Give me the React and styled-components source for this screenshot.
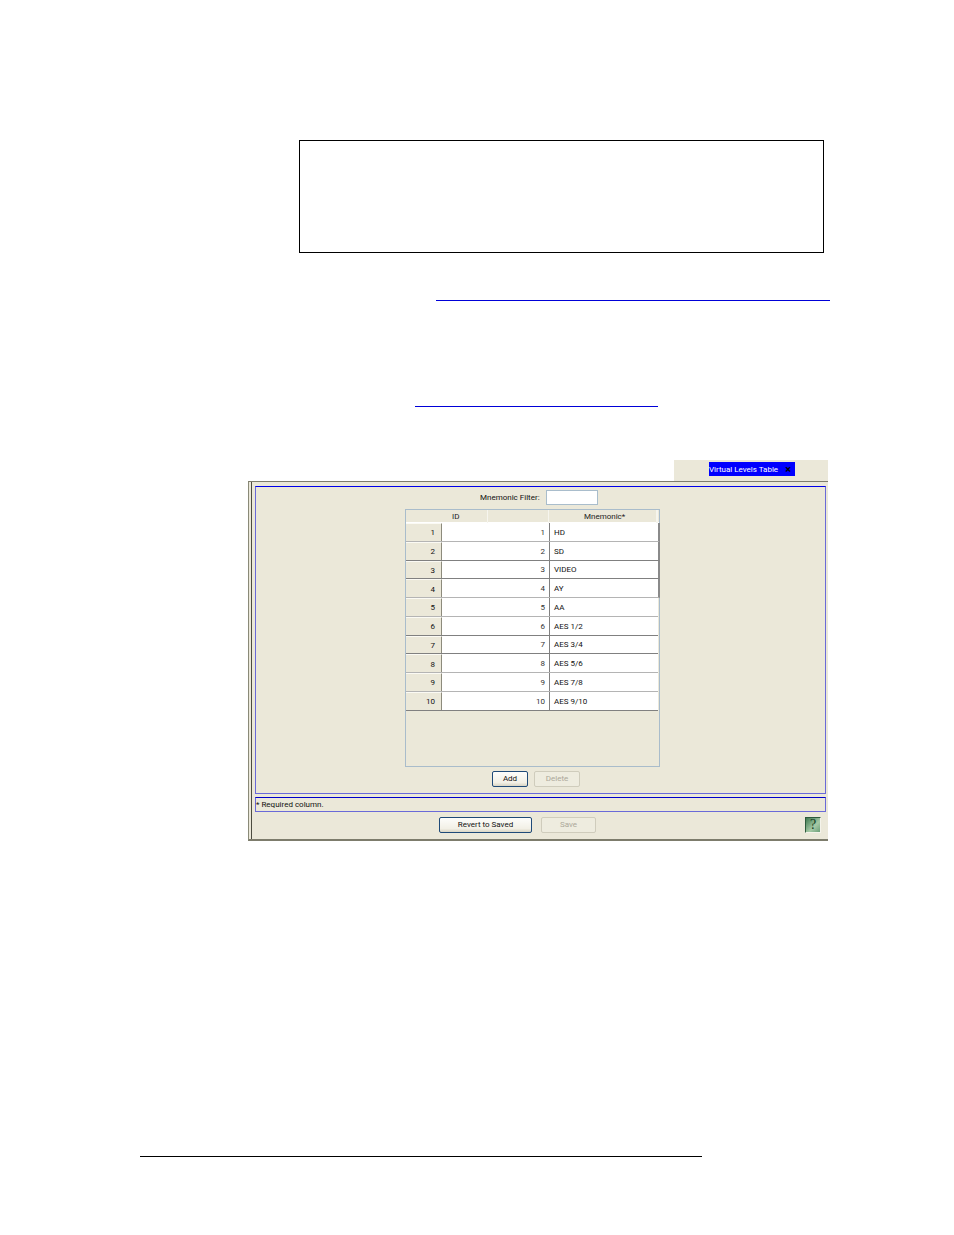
import React from "react";
import styled, { createGlobalStyle } from "styled-components";

const uiFont = `Roboto, "Liberation Sans", Arial, sans-serif`;

const Global = createGlobalStyle`
  html, body { margin: 0; padding: 0; background: #fff; }
  body { font-family: ${uiFont}; }
  #root { width: 954px; height: 1235px; overflow: hidden; }
`;

const Page = styled.div`
  display: flex;
  flex-direction: column;
  align-items: flex-start;
  width: 954px;
  height: 1235px;
  padding-top: 140px;
  box-sizing: border-box;
`;

const NoteBox = styled.div`
  width: 525px;
  height: 113px;
  margin-left: 299px;
  box-sizing: border-box;
  border: 1px solid #000;
`;

const LinkRule = styled.div`
  width: ${(p) => p.$width}px;
  height: 1px;
  margin-left: ${(p) => p.$left}px;
  margin-top: ${(p) => p.$top}px;
  background: #0000d8;
`;

const TabBar = styled.div`
  display: flex;
  justify-content: flex-end;
  margin-top: 53px;
  margin-left: 248px;
  width: 580px;
`;

const TabStrip = styled.div`
  width: 154px;
  height: 21px;
  box-sizing: border-box;
  padding: 2px 0 0 35px;
  background: #ebe8d9;
`;

const ActiveTab = styled.div`
  display: flex;
  align-items: center;
  justify-content: space-between;
  width: 86px;
  height: 14px;
  box-sizing: border-box;
  padding: 0 4px 0 0;
  background: #0000ff;
  color: #fff;
  font-size: 8px;
  white-space: nowrap;
`;

const CloseMark = styled.span`
  color: #000;
  font-size: 11px;
  font-weight: 700;
  line-height: 1;
`;

const Win = styled.div`
  display: flex;
  flex-direction: column;
  width: 580px;
  height: 360px;
  margin-left: 248px;
  box-sizing: border-box;
  padding: 4px 2px 0 4px;
  background: #ebe8d9;
  border-top: 1px solid #7d7c6c;
  border-bottom: 2px solid #7d7c6c;
  border-left: 1px solid #8a8a78;
  box-shadow: inset 2px 0 0 #ebe8d9, inset 3px 0 0 #4c4c40;
`;

const Panel = styled.div`
  display: flex;
  flex-direction: column;
  height: 308px;
  box-sizing: border-box;
  margin-left: 2px;
  padding: 3px 0 0 149px;
  border: 1px solid #6a6ad8;
  border-top-color: #0000e8;
`;

const FilterRow = styled.div`
  display: flex;
  align-items: center;
  gap: 8px;
  height: 15px;
  padding-left: 75px;
  font-size: 8px;
  color: #111;
`;

const FilterLabel = styled.span`
  width: 58px;
  white-space: nowrap;
  padding-bottom: 1px;
`;

const FilterInput = styled.div`
  width: 52px;
  height: 15px;
  box-sizing: border-box;
  background: #fff;
  border: 1px solid #a9bdcc;
`;

const Table = styled.div`
  display: flex;
  flex-direction: column;
  width: 255px;
  height: 258px;
  margin-top: 4px;
  box-sizing: border-box;
  border: 1px solid #a9bccb;
`;

const HeaderRow = styled.div`
  display: grid;
  grid-template-columns: 82px 61px 109px;
  height: 13px;
  box-sizing: border-box;
  font-size: 8px;
  color: #222;
  line-height: 14px;
  border-bottom: 1px solid #fff;
`;

const HeaderId = styled.div`
  padding-left: 46px;
  border-right: 1px solid #f6f5ee;
`;

const HeaderSpacer = styled.div`
  border-right: 1px solid #f6f5ee;
`;

const HeaderCell = styled.div`
  padding-left: 35px;
  border-right: 2px solid #f6f5ee;
`;

const Row = styled.div`
  display: grid;
  grid-template-columns: 36px 108px 108px;
  width: ${(p) => (p.$bar ? 254 : 252)}px;
  height: 18.75px;
  box-sizing: border-box;
  font-size: 8px;
  color: #111;
  background: #fff;
  border-bottom: 1px solid ${(p) => (p.$dark ? "#808080" : "#b4b4b4")};
  ${(p) => p.$bar && "border-right: 2px solid #8a8a8a;"}
`;

const RowHead = styled.div`
  display: flex;
  align-items: center;
  justify-content: flex-end;
  padding: 1px 6px 0 0;
  background: #ebe8d9;
  border-top: 1px solid #fbfaf4;
  border-right: 1px solid #8d8b7c;
`;

const IdCell = styled.div`
  display: flex;
  align-items: center;
  justify-content: flex-end;
  padding: 1px 4px 0 0;
  border-right: 1px solid #808080;
  color: #333;
`;

const NameCell = styled.div`
  display: flex;
  align-items: center;
  padding: 1px 0 0 4px;
`;

const TableActions = styled.div`
  display: flex;
  gap: 6px;
  margin-top: 4px;
  padding-left: 87px;
`;

const Btn = styled.div`
  display: flex;
  flex-shrink: 0;
  align-items: center;
  justify-content: center;
  width: ${(p) => p.$w}px;
  height: 16px;
  box-sizing: border-box;
  padding-bottom: 2px;
  font-size: 8px;
  color: ${(p) => (p.$off ? "#aca899" : "#111")};
  background: ${(p) =>
    p.$off ? "#eeecdf" : "linear-gradient(#fdfdfb, #f2f0e6 75%, #d9d5c4)"};
  border: 1px solid ${(p) => (p.$off ? "#cfccbc" : "#1f4a78")};
  border-radius: 2px;
`;

const StatusBar = styled.div`
  display: flex;
  align-items: center;
  height: 15px;
  margin: 3px 0 0 2px;
  box-sizing: border-box;
  border: 1px solid #6a6ad8;
  border-top-color: #0000c8;
  font-size: 8px;
  color: #111;
`;

const Footer = styled.div`
  display: flex;
  align-items: flex-start;
  gap: 9px;
  margin-top: 5px;
  padding-left: 186px;
`;

const HelpIcon = styled.div`
  display: flex;
  flex-shrink: 0;
  align-items: center;
  justify-content: center;
  width: 16px;
  height: 16px;
  margin-left: 200px;
  box-sizing: border-box;
  background: linear-gradient(135deg, #3f7a50, #a5c9a6 60%, #6c9f78);
  border: 1px solid #2d5b3c;
  border-right-color: #f4f3ea;
  border-bottom-color: #f4f3ea;
  color: #123c22;
  font-size: 14px;
  font-family: "Liberation Serif", serif;
`;

const BottomRule = styled.div`
  width: 562px;
  height: 1px;
  margin-left: 140px;
  margin-top: 315px;
  background: #000;
`;

const rows = [
  ["1", "HD", 0, 1],
  ["2", "SD", 1, 1],
  ["3", "VIDEO", 1, 1],
  ["4", "AY", 0, 1],
  ["5", "AA", 0, 0],
  ["6", "AES 1/2", 1, 0],
  ["7", "AES 3/4", 1, 0],
  ["8", "AES 5/6", 0, 0],
  ["9", "AES 7/8", 0, 0],
  ["10", "AES 9/10", 1, 0],
];

export default function App() {
  return (
    <Page>
      <Global />
      <NoteBox />
      <LinkRule $left={436} $width={394} $top={47} />
      <LinkRule $left={415} $width={243} $top={105} />
      <TabBar>
        <TabStrip>
          <ActiveTab>
            Virtual Levels Table
            <CloseMark>×</CloseMark>
          </ActiveTab>
        </TabStrip>
      </TabBar>
      <Win>
        <Panel>
          <FilterRow>
            <FilterLabel>Mnemonic Filter:</FilterLabel>
            <FilterInput />
          </FilterRow>
          <Table>
            <HeaderRow>
              <HeaderId>ID</HeaderId>
              <HeaderSpacer />
              <HeaderCell>Mnemonic*</HeaderCell>
            </HeaderRow>
            {rows.map(([id, name, dark, bar]) => (
              <Row key={id} $dark={!!dark} $bar={!!bar}>
                <RowHead>{id}</RowHead>
                <IdCell>{id}</IdCell>
                <NameCell>{name}</NameCell>
              </Row>
            ))}
          </Table>
          <TableActions>
            <Btn $w={36}>Add</Btn>
            <Btn $w={46} $off>Delete</Btn>
          </TableActions>
        </Panel>
        <StatusBar>* Required column.</StatusBar>
        <Footer>
          <Btn $w={93}>Revert to Saved</Btn>
          <Btn $w={55} $off>Save</Btn>
          <HelpIcon>?</HelpIcon>
        </Footer>
      </Win>
      <BottomRule />
    </Page>
  );
}
